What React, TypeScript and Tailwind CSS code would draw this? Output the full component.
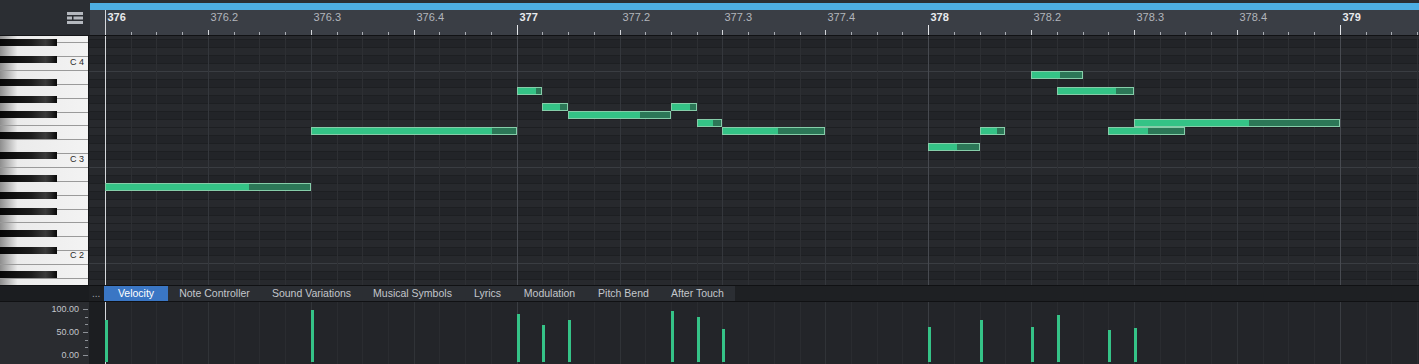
import React from "react";

// piano roll geometry (page px)
const SUB = 102.9 / 4; // one sixteenth
const X0 = 105; // start of bar 376
const GRID_X = 89;
const GRID_Y = 36;
const sx = (j: number) => X0 + j * SUB;

type Note = { x: number; bright: number; end: number; y: number; vel: number };

const notes: Note[] = [
  { x: sx(0), bright: 249, end: sx(8), y: 183, vel: 320 },
  { x: sx(8), bright: 492, end: sx(16), y: 127, vel: 310 },
  { x: sx(16), bright: 536, end: sx(17), y: 87, vel: 314 },
  { x: sx(17), bright: 560, end: sx(18), y: 103, vel: 325 },
  { x: sx(18), bright: 640, end: sx(22), y: 111, vel: 320 },
  { x: sx(22), bright: 690, end: sx(23), y: 103, vel: 311 },
  { x: sx(23), bright: 713, end: sx(24), y: 119, vel: 317 },
  { x: sx(24), bright: 778, end: sx(28), y: 127, vel: 329 },
  { x: sx(32), bright: 957, end: sx(34), y: 143, vel: 327 },
  { x: sx(34), bright: 997, end: sx(35), y: 127, vel: 320 },
  { x: sx(36), bright: 1060, end: sx(38), y: 71, vel: 327 },
  { x: sx(37), bright: 1116, end: sx(40), y: 87, vel: 315 },
  { x: sx(39), bright: 1148, end: sx(42), y: 127, vel: 330 },
  { x: sx(40), bright: 1249, end: sx(48), y: 119, vel: 328 },
];

const tabs = [
  { label: "Note Controller", w: "w-[93px]" },
  { label: "Sound Variations", w: "w-[101px]" },
  { label: "Musical Symbols", w: "w-[101px]" },
  { label: "Lyrics", w: "w-[49px]" },
  { label: "Modulation", w: "w-[75px]" },
  { label: "Pitch Bend", w: "w-[73px]" },
  { label: "After Touch", w: "w-[75px]" },
];

const blackKeyTops = [39, 56, 79, 96, 111, 132, 152, 175, 192, 208, 230, 247, 271];
const octaveLabels = [
  { label: "C 4", y: 62 },
  { label: "C 3", y: 159 },
  { label: "C 2", y: 255 },
];

function MenuIcon() {
  return (
    <svg width="16" height="12" viewBox="0 0 16 12" fill="#b4b8be">
      <rect x="0" y="0" width="16" height="3" />
      <rect x="0" y="4.5" width="5" height="3" />
      <rect x="6.5" y="4.5" width="9.5" height="3" />
      <rect x="0" y="9" width="16" height="3" />
    </svg>
  );
}

function colColor(j: number) {
  if (j % 16 === 0) return "#474a50";
  if (j % 4 === 0) return "#34373c";
  return "#2d2f33";
}

function Ruler() {
  const ticks = [];
  const labels = [];
  for (let j = 0; j <= 51; j++) {
    const x = Math.round(sx(j)) - 90 + 0.5;
    if (j % 16 === 0) {
      ticks.push(<line key={j} x1={x} x2={x} y1={15} y2={25} stroke="#e4e6e9" />);
    } else if (j % 4 === 0) {
      ticks.push(<line key={j} x1={x} x2={x} y1={20} y2={25} stroke="#d2d5d9" />);
    } else {
      ticks.push(<line key={j} x1={x} x2={x} y1={22} y2={25} stroke="#a9adb3" />);
    }
    if (j % 4 === 0) {
      const bar = 376 + Math.floor(j / 16);
      const beat = (j / 4) % 4;
      labels.push(
        <span
          key={j}
          className={
            beat === 0
              ? "absolute top-[1px] text-[11px] font-bold leading-[13px] text-[#e8eaed]"
              : "absolute top-[1px] text-[11px] leading-[13px] text-[#b2b6bc]"
          }
          style={{ left: x + 2 }}
        >
          {beat === 0 ? bar : `${bar}.${beat + 1}`}
        </span>
      );
    }
  }
  return (
    <div className="relative h-[26px] border-b border-[#111214] bg-[#3a3e45]">
      <svg className="absolute inset-0" width={1329} height={25}>
        {ticks}
        <line x1={15.5} x2={15.5} y1={0} y2={25} stroke="#d4d7db" />
      </svg>
      {labels}
    </div>
  );
}

function Keyboard() {
  const lines = [];
  for (let n = -3; n <= 16; n++) {
    const y = Math.round(70 + 13.86 * n) - GRID_Y + 0.5;
    if (y < 0 || y > 249) continue;
    lines.push(<line key={n} x1={0} x2={88} y1={y} y2={y} stroke="#9a9a9a" />);
  }
  return (
    <div className="relative h-[249px] w-[89px]">
      <svg className="absolute inset-0" width={89} height={249}>
        <defs>
          <linearGradient id="wk" x1="0" x2="1" y1="0" y2="0">
            <stop offset="0" stopColor="#8e8e8e" />
            <stop offset="0.2" stopColor="#ebebeb" />
            <stop offset="1" stopColor="#f3f3f3" />
          </linearGradient>
          <linearGradient id="bk" x1="0" x2="1" y1="0" y2="0">
            <stop offset="0" stopColor="#060606" />
            <stop offset="0.55" stopColor="#1c1c1c" />
            <stop offset="0.8" stopColor="#3b3b3b" />
            <stop offset="0.9" stopColor="#262626" />
            <stop offset="1" stopColor="#080808" />
          </linearGradient>
        </defs>
        <rect x={0} y={0} width={88} height={249} fill="url(#wk)" />
        {lines}
        {blackKeyTops.map((t) => (
          <rect key={t} x={0} y={t - GRID_Y} width={57} height={7} fill="url(#bk)" />
        ))}
        <line x1={88.5} x2={88.5} y1={0} y2={249} stroke="#151618" />
      </svg>
      {octaveLabels.map((o) => (
        <span
          key={o.label}
          className="absolute left-[70px] text-[9px] leading-[10px] text-[#2a2a2a]"
          style={{ top: o.y - GRID_Y - 5 }}
        >
          {o.label}
        </span>
      ))}
    </div>
  );
}

function NoteGrid() {
  const W = 1419 - GRID_X;
  const rows = [];
  for (let k = -5; k <= 31; k++) {
    const y = 35 + 8 * k;
    const semi = (((11 - k) % 12) + 12) % 12;
    const black = [1, 3, 6, 8, 10].includes(semi);
    rows.push(<rect key={`r${k}`} x={0} y={y} width={W} height={8} fill={black ? "#222428" : "#27292d"} />);
    rows.push(
      <line
        key={`l${k}`}
        x1={0}
        x2={W}
        y1={y + 0.5}
        y2={y + 0.5}
        stroke={k % 12 === 0 ? "#3a3d42" : "#1d1f22"}
      />
    );
  }
  const cols = [];
  for (let j = 0; j <= 51; j++) {
    const x = Math.round(sx(j)) - GRID_X + 0.5;
    cols.push(<line key={j} x1={x} x2={x} y1={0} y2={249} stroke={colColor(j)} />);
  }
  return (
    <div className="relative h-[249px] flex-1 overflow-hidden bg-[#25272b]">
      <svg className="absolute inset-0" width={W} height={249}>
        {rows}
        {cols}
        <line x1={16.5} x2={16.5} y1={0} y2={249} stroke="#d4d7db" />
      </svg>
      {notes.map((n, i) => {
        const left = Math.round(n.x) - GRID_X;
        const width = Math.round(n.end) - Math.round(n.x);
        const bright = n.bright - Math.round(n.x) - 1;
        return (
          <div
            key={i}
            className="absolute flex h-[8px] border border-[#86cda9] bg-[#2c7757]"
            style={{ left, top: n.y - GRID_Y, width }}
          >
            <div className="h-full bg-[#34c386]" style={{ width: bright }} />
          </div>
        );
      })}
    </div>
  );
}

function TabsBar() {
  return (
    <div className="flex h-[17px] border-y border-[#101113] bg-[#1e2023]">
      <div className="w-[89px] bg-[#1b1d20]" />
      <div className="flex w-[15px] items-center pl-[3px] text-[10px] leading-none text-[#9ea2a8]">...</div>
      <div className="flex items-end">
        <div className="flex h-[15px] w-[64px] items-center justify-center bg-[#3a76c4] text-[10.5px] text-white">
          Velocity
        </div>
        {tabs.map((t) => (
          <div
            key={t.label}
            className={`flex h-[15px] ${t.w} items-center justify-center bg-[#2b2e33] text-[10.5px] text-[#c3c7cc]`}
          >
            {t.label}
          </div>
        ))}
      </div>
    </div>
  );
}

function VelocityLane() {
  const W = 1419 - GRID_X;
  const cols = [];
  for (let j = 0; j <= 51; j++) {
    const x = Math.round(sx(j)) - GRID_X + 0.5;
    cols.push(
      <line key={j} x1={x} x2={x} y1={0} y2={62} stroke={j % 16 === 0 ? "#3a3d42" : j % 4 === 0 ? "#303337" : "#2a2c30"} />
    );
  }
  const ticks = [0, 1, 2, 3, 4, 5, 6].map((i) => {
    const y = Math.round(7 + i * 7.67) + 0.5;
    return <line key={i} x1={i % 3 === 0 ? 83 : 85} x2={88} y1={y} y2={y} stroke="#8d9197" />;
  });
  return (
    <div className="flex h-[62px]">
      <div className="relative w-[89px] bg-[#2a2c30]">
        <svg className="absolute inset-0" width={89} height={62}>
          {ticks}
        </svg>
        {[
          { t: "100.00", y: 7 },
          { t: "50.00", y: 30 },
          { t: "0.00", y: 53 },
        ].map((l) => (
          <span
            key={l.t}
            className="absolute right-[10px] text-[9px] leading-[10px] text-[#c2c5ca]"
            style={{ top: l.y - 5 }}
          >
            {l.t}
          </span>
        ))}
      </div>
      <div className="relative flex-1 bg-[#232529]">
        <svg className="absolute inset-0" width={W} height={62}>
          <rect x={0} y={0} width={16} height={62} fill="#1c1e21" />
          {cols}
          <line x1={16.5} x2={16.5} y1={0} y2={62} stroke="#d4d7db" />
          {notes.map((n, i) => (
            <rect
              key={i}
              x={Math.round(n.x) - GRID_X}
              y={n.vel - 302}
              width={3}
              height={362 - n.vel}
              fill="#35c387"
            />
          ))}
        </svg>
      </div>
    </div>
  );
}

export default function App() {
  return (
    <div className="flex h-[364px] w-[1419px] flex-col overflow-hidden bg-[#1d1f22] font-['Liberation_Sans',Arial,sans-serif] select-none">
      <div className="flex h-[36px]">
        <div className="w-[90px] border-b border-[#141518] bg-[#2b2e33] pl-[67px] pt-[12px]">
          <MenuIcon />
        </div>
        <div className="flex flex-1 flex-col">
          <div className="h-[3px] bg-[#2b2e33]" />
          <div className="h-[7px] bg-[#4daee3]" />
          <Ruler />
        </div>
      </div>
      <div className="flex h-[249px]">
        <Keyboard />
        <NoteGrid />
      </div>
      <TabsBar />
      <VelocityLane />
    </div>
  );
}
